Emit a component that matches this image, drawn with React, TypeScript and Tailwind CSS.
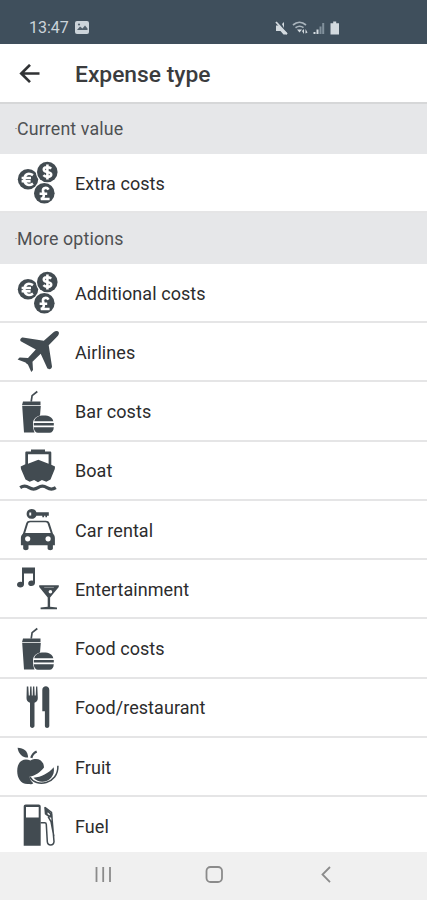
import type { ReactNode } from 'react'

const ink = '#424b51'

function Icon({ children }: { children: ReactNode }) {
  return (
    <svg width="44" height="44" viewBox="0 0 44 44" fill={ink} className="shrink-0">
      {children}
    </svg>
  )
}

function CoinsIcon() {
  return (
    <Icon>
      <circle cx="12" cy="18.3" r="10.2" />
      <circle cx="31.3" cy="11" r="11.4" fill="#fff" />
      <circle cx="31.3" cy="11" r="10.3" />
      <circle cx="28.3" cy="32.3" r="10.3" />
      <g fill="none" stroke="#fff" strokeWidth="2.6">
        <path d="M17 14.2c-5.2-3.4-8.6-.4-8.6 4.2s3.6 7.4 8.6 4.2M5.6 17H15M5.6 20.2h9" />
        <path d="M35.2 7.6c-2.4-2.2-7.4-1.8-7.4.8 0 3.6 7.4 1.6 7.4 5.2 0 2.8-5.4 3-7.8.6M31.4 3.6v14.8" />
        <path d="M32.6 28.6c-1.8-2.8-6-1.8-5.6 1.4l.8 4c.2 2-1 3.4-3 4h8.8M23.6 32.8h7.6" />
      </g>
    </Icon>
  )
}

function PlaneIcon() {
  return (
    <Icon>
      <path d="M37.5 2.2c2-1.7 4.4-1.5 5.2-.3.7 1.3-.1 3.2-1.5 4.6l-8.5 8.7 3.3 21.2c.1 2.3-3.5 4-4.8 1.600l-6.500-14.300-8.200 8 .5 8.400-1.700 2-3.400-7.600-1.200-.7-1.200-1.200-7.900-3 2-2 8.400.3 7.800-8.500L5.200 11.400c-2.200-1.200-.3-4 1.600-4l21 3.400z" />
    </Icon>
  )
}

function DrinkIcon() {
  return (
    <Icon>
      <path d="M21.3 1.5l-5.2 4.2-.9 6" fill="none" stroke={ink} strokeWidth="1.7" />
      <path d="M7 11.6h17.500v3.600H6z" />
      <path d="M6.2 16h18.600l-.8 9.500c-4.500 1.200-7 4-7 8 0 3 .3 6.500 1.600 8.900H8z" />
      <path d="M18.3 31.2c.8-3.6 4.2-5.6 9.500-5.600s8.700 2 9.500 5.600zM17.800 32.900h20v2.700h-20zM17.800 37.200h20c-.2 3.600-1.800 5.500-4.200 5.500H22c-2.400 0-4-1.900-4.200-5.500z" />
    </Icon>
  )
}

function BoatIcon() {
  return (
    <Icon>
      <path
        fillRule="evenodd"
        d="M15 .4h14v2h5c.8 0 1.3.5 1.3 1.3v12.1l3.700 1.700-.2 2.500-4.300 10.500-4.200 2.200-4.400-1.800-3.900 2.300-3.900-2.300-4.400 1.800-4.200-2.200L5 20l-.3-2.500 4.600-2.200V3.700c0-.8.5-1.300 1.300-1.300H15zM12 5.300v9.400l10.300-3.900L32.600 14.700V5.300z"
      />
      <path
        d="M4.200 38.600c3-2 5.800-2 8.900 0 3.100 2 5.800 2 8.900 0 3-2 5.800-2 8.900 0 3.100 2 5.800 2 8.900 0"
        fill="none"
        stroke={ink}
        strokeWidth="3.2"
      />
    </Icon>
  )
}

function CarIcon() {
  return (
    <Icon>
      <path
        fillRule="evenodd"
        d="M15.5 1c2.5 0 4.2 1.2 4.9 3.2h12.4v3.500H31v1.500h-1.600V7.700h-1.300v1.500h-1.800V7.700h-5.900c-.7 2-2.400 3.100-4.900 3.100-6.500 0-6.500-9.800 0-9.800zM13.300 4.500v2.900h1.900V4.500z"
      />
      <path
        fillRule="evenodd"
        d="M14 12.8h15.8c2 0 3.2.8 3.8 2.500l3.300 10.200c1.500 1.600 2 3 2 5v6.700h-2v3.400c0 2.300-5.300 2.300-5.300 0v-3.400H12.500v3.400c0 2.300-5.300 2.300-5.300 0v-3.400h-2.300v-6.700c0-2 .5-3.400 2.100-5l3.200-10.200c.6-1.700 1.800-2.500 3.800-2.500zM11.900 16.200L9.200 25h25.500l-2.900-8.800c-.4-1.200-.9-1.900-2.300-1.900H14.400c-1.500 0-2.100.7-2.500 1.900z"
      />
      <circle cx="11.7" cy="30.8" r="2.6" fill="#fff" />
      <circle cx="32.1" cy="30.8" r="2.6" fill="#fff" />
    </Icon>
  )
}

function EntertainmentIcon() {
  return (
    <Icon>
      <path d="M6 .6h13v15.2c0 4.2-6.800 4.200-6.800.6 0-2.600 2.600-3.600 4.800-2.600V6.500H8v10.700c0 4.200-7 4.200-7 .5 0-2.600 2.800-3.600 5-2.600z" />
      <path d="M23.2 18.2h19.600v1.700l-8.700 10.700v9.200l6.900.6v1.800H24.600v-1.800l7.100-.6v-9.200l-8.500-10.700z" />
      <path d="M28.2 20.4h9.7" stroke="#8d9397" strokeWidth="1" />
      <circle cx="34.4" cy="24.8" r="1.8" fill="#fff" />
    </Icon>
  )
}

function CutleryIcon() {
  return (
    <Icon>
      <path d="M10.8.5h1.500l.5 9h1l.4-9h1.300l.3 9h.9l.3-9h1.300l.4 9h1l.4-9h1.200l.5 11.500c0 2.500-1 3.900-3.300 4.800v23c0 2.800-4.500 2.800-4.500 0v-23c-2.300-.9-3.500-2.300-3.500-4.800z" />
      <path d="M26.300 4c0-4.800 7-5 7 0v36c0 2.600-4.400 2.600-4.400 0V25.300h-2.600z" />
    </Icon>
  )
}

function FruitIcon() {
  return (
    <Icon>
      <path d="M1.6 2.7c6.2.4 10.3 2.9 10.500 9.900C6.800 12.800 2.400 9 1.600 2.700z" />
      <path d="M20.7 6.500c-2.700 1.300-4.600 3.200-5.400 6.400" fill="none" stroke={ink} strokeWidth="2.3" />
      <path d="M14.5 15.400c6.300-3.500 13.300-.8 13.500 7.100-3.800 5-8.300 7.900-14.500 9.300.3 2.600 1.700 4.600 3.800 6.400-1.700 1.600-3.500.8-5.300.8C4.700 39.300 1.200 33 1.200 26c0-9.200 5.700-13.600 13.300-10.600z" />
      <path d="M17.5 32.700c8-.6 14.800-4.200 20.200-10.400 2.500 12.500-12.300 19.400-20.200 10.400z" />
      <path d="M14 32.200c5.500 10.500 28.500 7.400 27.900-11.500" fill="none" stroke={ink} strokeWidth="1.5" />
    </Icon>
  )
}

function FuelIcon() {
  return (
    <Icon>
      <path fillRule="evenodd" d="M9.7.6h13c1.2 0 2 .8 2 2v39.200h-17V2.600c0-1.200.8-2 2-2zM10 2.900v10.600h12.700V2.900z" />
      <path
        d="M24.5 18.8h4.200c1 0 1.600.6 1.600 1.600l1 17.200c.4 4.600 6.300 4.600 6.700 0L35.500 8.400l-6.600-5.100M37.900 32.500l-2.900-15-2.800-4.600"
        fill="none"
        stroke={ink}
        strokeWidth="1.5"
      />
      <path fillRule="evenodd" d="M28.2 2.7l8 7.2v3.600h-3l-4.400-3.200zM31.7 8.200l-.2 1.700 2 1.500.5-1.200z" />
    </Icon>
  )
}

const options = [
  { label: 'Additional costs', icon: <CoinsIcon /> },
  { label: 'Airlines', icon: <PlaneIcon /> },
  { label: 'Bar costs', icon: <DrinkIcon /> },
  { label: 'Boat', icon: <BoatIcon /> },
  { label: 'Car rental', icon: <CarIcon /> },
  { label: 'Entertainment', icon: <EntertainmentIcon /> },
  { label: 'Food costs', icon: <DrinkIcon /> },
  { label: 'Food/restaurant', icon: <CutleryIcon /> },
  { label: 'Fruit', icon: <FruitIcon /> },
  { label: 'Fuel', icon: <FuelIcon /> },
]

function StatusBar() {
  return (
    <div className="flex h-11 shrink-0 items-center bg-[#3f4f5c] pt-[11px] pl-[29px] text-[#ccd4da]">
      <span className="w-[46px] text-[16px] leading-none">13:47</span>
      <svg width="14" height="13" viewBox="0 0 14 13">
        <rect width="14" height="13" rx="2" fill="#ccd4da" />
        <path d="M2 9l3-3.5 2.500 2L10 4.500l2.500 3V9z" fill="#52616d" />
        <circle cx="4" cy="3.5" r="1.1" fill="#52616d" />
      </svg>
      <svg width="66" height="14" viewBox="0 0 66 14" className="ml-[186px]" fill="#d3dadf">
        <path d="M1 4.5h3L7.500 8l4.500 4v1.500H8.500L5.500 10H1zM7 3l2-2v6z" />
        <path d="M1 1l11 12" stroke="#d3dadf" strokeWidth="1.8" />
        <g fill="none" stroke="#aab5bd" strokeWidth="1.7">
          <path d="M18 4c4-3.5 9-3.500 13 0M20.500 6.700c3-2 5.500-2 8 0" />
        </g>
        <path d="M22 8.5h5l-2.500 3zM27 10l2-2v5zM30.500 8l2 3.500-2 1z" />
        <path d="M38.5 13v-2h2v2zM41.500 13V8.500h2V13z" />
        <path d="M44.5 13V5.500h2V13zM47.200 13V2h2v11z" fill="#81909b" />
        <path d="M55.5 2.2h2.700V.5h3v1.700H64v11.300h-8.500z" />
      </svg>
    </div>
  )
}

function SectionHeader({ title }: { title: string }) {
  return (
    <div className="flex h-[50.5px] shrink-0 items-center bg-[#e6e7e9] pl-[15px]">
      <span className="h-px w-[2px] bg-[#a9abae]" />
      <h2 className="text-[17.8px] leading-6 tracking-[0.14px] text-[#4f5153]">{title}</h2>
    </div>
  )
}

function Row({ label, icon }: { label: string; icon: ReactNode }) {
  return (
    <li className="flex h-[59.25px] shrink-0 items-center border-b-2 border-[#e5e5e6] pt-[1.4px] pl-4">
      {icon}
      <span className="ml-[15px] text-[18px] tracking-[0.06px] text-[#2c2c2d]">{label}</span>
    </li>
  )
}

function App() {
  return (
    <div className="flex h-[900px] w-full flex-col overflow-hidden bg-white font-[Roboto,sans-serif]">
      <StatusBar />

      {/* Title bar */}
      <header className="flex h-[59.5px] shrink-0 items-center border-b-2 border-[#d6d7d8] pt-[3px] pl-[19px]">
        <svg width="22" height="20" viewBox="0 0 22 20" fill="none" stroke="#303234" strokeWidth="2.7">
          <path d="M20.5 9.5h-18M11 .9L2.300 9.500l8.700 8.600" />
        </svg>
        <h1 className="ml-[34px] pt-[2px] text-[22.8px] font-medium text-[#3b3c3e]">Expense type</h1>
      </header>

      {/* List */}
      <main className="flex min-h-0 flex-1 flex-col overflow-hidden">
        <SectionHeader title="Current value" />
        <ul>
          <Row label="Extra costs" icon={<CoinsIcon />} />
        </ul>
        <SectionHeader title="More options" />
        <ul>
          {options.map((option) => (
            <Row key={option.label} label={option.label} icon={option.icon} />
          ))}
        </ul>
      </main>

      {/* Navigation bar */}
      <nav className="flex h-12 shrink-0 items-center bg-[#f0f0f0] pb-[2px] pl-[95px]">
        <svg width="240" height="20" viewBox="0 0 240 20" fill="none" stroke="#8b8b8b" strokeWidth="1.8">
          <path d="M1.5 2v15M8.200 2v15M15 2v15" />
          <rect x="111.5" y="2" width="15.5" height="15" rx="4" />
          <path d="M235 2l-7.500 7.500 7.500 7.700" />
        </svg>
      </nav>
    </div>
  )
}

export default App
